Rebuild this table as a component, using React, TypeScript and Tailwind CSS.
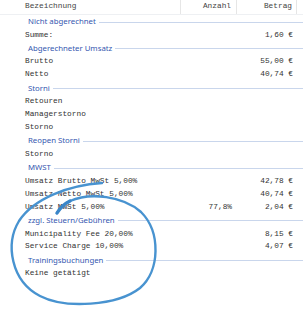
import React from "react";

type Row =
  | { kind: "sec"; label: string }
  | { kind: "row"; label: string; anzahl?: string; betrag?: string };

const rows: Row[] = [
  { kind: "sec", label: "Nicht abgerechnet" },
  { kind: "row", label: "Summe:", betrag: "1,60 €" },
  { kind: "sec", label: "Abgerechneter Umsatz" },
  { kind: "row", label: "Brutto", betrag: "55,00 €" },
  { kind: "row", label: "Netto", betrag: "40,74 €" },
  { kind: "sec", label: "Storni" },
  { kind: "row", label: "Retouren" },
  { kind: "row", label: "Managerstorno" },
  { kind: "row", label: "Storno" },
  { kind: "sec", label: "Reopen Storni" },
  { kind: "row", label: "Storno" },
  { kind: "sec", label: "MWST" },
  { kind: "row", label: "Umsatz Brutto MwSt 5,00%", betrag: "42,78 €" },
  { kind: "row", label: "Umsatz Netto MwSt 5,00%", betrag: "40,74 €" },
  { kind: "row", label: "Umsatz MwSt 5,00%", anzahl: "77,8%", betrag: "2,04 €" },
  { kind: "sec", label: "zzgl. Steuern/Gebühren" },
  { kind: "row", label: "Municipality Fee 20,00%", betrag: "8,15 €" },
  { kind: "row", label: "Service Charge 10,00%", betrag: "4,07 €" },
  { kind: "sec", label: "Trainingsbuchungen" },
  { kind: "row", label: "Keine getätigt" },
];

const mono = { fontFamily: '"Liberation Mono", "Courier New", monospace' };

export default function App() {
  return (
    <div className="relative w-[303px] h-[311px] bg-white overflow-hidden">
      <div className="flex flex-col">
        <div
          className="flex h-[15px] items-center text-[7.8px] text-[#444] border-b border-[#eef0f3]"
          style={mono}
        >
          <div className="w-[181px] h-full flex items-center pl-[25px] border-r border-[#e6e6e6]">
            Bezeichnung
          </div>
          <div className="w-[56px] h-full flex items-center justify-end pr-[5px] border-r border-[#e6e6e6]">
            Anzahl
          </div>
          <div className="w-[60px] h-full flex items-center justify-end pr-[4px] border-r border-[#e6e6e6]">
            Betrag
          </div>
          <div className="flex-1" />
        </div>
        {rows.map((r, i) =>
          r.kind === "sec" ? (
            <div key={i} className="flex h-[14px] items-center pl-[28px]">
              <span
                className="text-[7.8px] text-[#3557b0] leading-none whitespace-nowrap"
                style={{ fontFamily: '"Noto Sans", "Open Sans", sans-serif' }}
              >
                {r.label}
              </span>
              <div className="flex-1 h-px bg-[#c9d6ec] ml-[3px]" />
            </div>
          ) : (
            <div
              key={i}
              className="flex h-[12.9px] items-center text-[7.8px] text-[#333] whitespace-pre"
              style={mono}
            >
              <div className="w-[181px] pl-[25px]">{r.label}</div>
              <div className="w-[56px] text-right pr-[5px]">{r.anzahl ?? ""}</div>
              <div className="w-[60px] text-right pr-[4px]">{r.betrag ?? ""}</div>
            </div>
          )
        )}
      </div>
      <svg
        className="absolute left-0 top-0 pointer-events-none"
        width="303"
        height="311"
        viewBox="0 0 303 311"
      >
        <path
          d="M102,183 C70,185 34,198 19,221 C5,244 11,281 40,296 C65,309 117,306 140,288 C160,271 161,232 141,212 C123,196 90,192 70,201 C64,204 60,208 57,213"
          fill="none"
          stroke="#4893d0"
          strokeWidth="2.4"
          strokeLinecap="round"
        />
        <path
          d="M70,201 C64,204 60,208 57,213"
          fill="none"
          stroke="#3a86c8"
          strokeWidth="3.4"
          strokeLinecap="round"
        />
      </svg>
    </div>
  );
}
